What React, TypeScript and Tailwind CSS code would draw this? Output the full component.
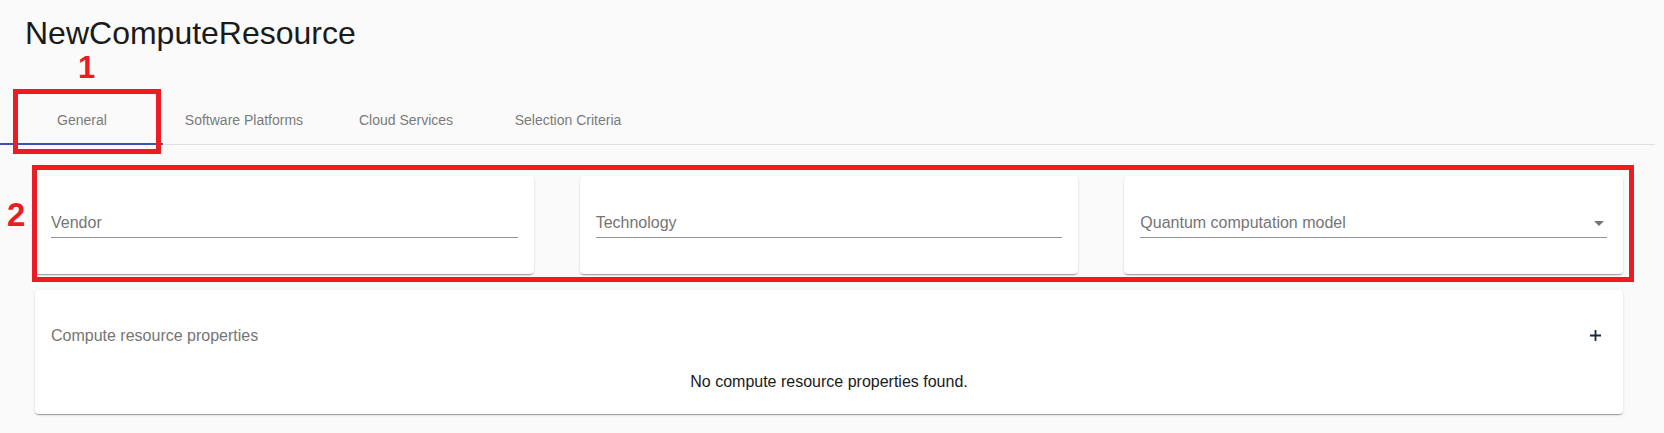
import React from "react";

const tabs = ["General", "Software Platforms", "Cloud Services", "Selection Criteria"];

function FieldCard({ label, select }: { label: string; select?: boolean }) {
  return (
    <div className="h-[98px] rounded-[4px] bg-white px-4 pt-[37px] shadow-[0_2px_1px_-1px_rgba(0,0,0,0.2),0_1px_1px_0_rgba(0,0,0,0.14),0_1px_3px_0_rgba(0,0,0,0.12)]">
      <div className="relative border-b border-[#949494] pb-[5px]">
        <div className="text-[16px] leading-[19px] text-[#757575]">{label}</div>
        {select && (
          <svg
            className="absolute right-[-4px] top-[-2px]"
            width="24"
            height="24"
            viewBox="0 0 24 24"
          >
            <path d="M7 10l5 5 5-5z" fill="#757575" />
          </svg>
        )}
      </div>
    </div>
  );
}

export default function App() {
  return (
    <div className="relative min-h-[433px] bg-[#fafafa] font-['Liberation_Sans',Arial,sans-serif]">
      <div className="pl-[25px] pt-[17px] text-[32px] leading-[32px] text-[#1a1a1a]">
        NewComputeResource
      </div>

      <div className="mt-[47px] box-border flex h-[49px] w-[1655px] border-b border-[#e0e0e0] pl-[1px]">
        {tabs.map((t, i) => (
          <div
            key={t}
            className="relative flex w-[162px] items-center justify-center text-[14px] text-[#7a7a7a]"
          >
            {t}
            {i === 0 && (
              <div className="absolute bottom-[-1px] left-[-1px] right-0 h-[2px] bg-[#3f51b5]" />
            )}
          </div>
        ))}
      </div>

      <div className="ml-[35px] mt-[31px] grid w-[1588px] grid-cols-3 gap-[46px]">
        <FieldCard label="Vendor" />
        <FieldCard label="Technology" />
        <FieldCard label="Quantum computation model" select />
      </div>

      <div className="ml-[35px] mt-[16px] w-[1588px] rounded-[4px] bg-white pb-[23px] pt-[25px] shadow-[0_2px_1px_-1px_rgba(0,0,0,0.2),0_1px_1px_0_rgba(0,0,0,0.14),0_1px_3px_0_rgba(0,0,0,0.12)]">
        <div className="flex h-[40px] items-center justify-between pl-4 pr-[22px]">
          <div className="text-[16px] leading-[19px] text-[#757575]">
            Compute resource properties
          </div>
          <svg width="11" height="11" viewBox="0 0 11 11">
            <path d="M5.5 0v11M0 5.5h11" stroke="#1c2833" strokeWidth="1.8" />
          </svg>
        </div>
        <div className="mt-[17px] text-center text-[16px] leading-[19px] text-[#1a1a1a]">
          No compute resource properties found.
        </div>
      </div>

      {/* annotation overlays */}
      <div className="absolute left-[13px] top-[89px] h-[65px] w-[148px] border-[5px] border-[#ed1c24]" />
      <div className="absolute left-[78px] top-[52px] text-[31px] font-bold leading-none text-[#ed1c24]">
        1
      </div>
      <div className="absolute left-[32px] top-[165px] h-[117px] w-[1602px] border-[5px] border-[#ed1c24]" />
      <div className="absolute left-[7px] top-[198px] text-[33px] font-bold leading-none text-[#ed1c24]">
        2
      </div>
    </div>
  );
}
